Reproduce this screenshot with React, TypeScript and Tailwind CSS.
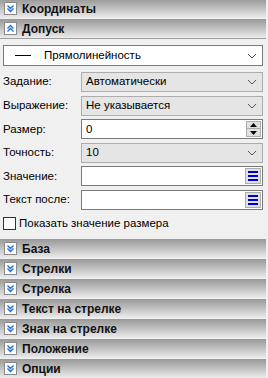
import React from "react";

const FONT = { fontFamily: '"Liberation Sans", Arial, sans-serif' };

function ChevronBox({ open }: { open: boolean }) {
   return (
      <span className="flex h-[13px] w-[13px] items-center justify-center border border-[#8a8a8a] bg-white">
         <svg width="9" height="9" viewBox="0 0 9 9" fill="none">
            {open ? (
               <path
                  d="M1.5 4.5 L4.5 1.5 L7.5 4.5 M1.5 7.5 L4.5 4.5 L7.5 7.5"
                  stroke="#1f6fd8"
                  strokeWidth="1.4"
               />
            ) : (
               <path
                  d="M1.5 1.5 L4.5 4.5 L7.5 1.5 M1.5 4.5 L4.5 7.5 L7.5 4.5"
                  stroke="#1f6fd8"
                  strokeWidth="1.4"
               />
            )}
         </svg>
      </span>
   );
}

function SectionHeader({ title, open = false }: { title: string; open?: boolean }) {
   return (
      <div className="flex h-[19px] w-[266px] items-center gap-[5px] bg-gradient-to-b from-[#989898] to-[#ececec] pl-[4px]">
         <ChevronBox open={open} />
         <span className="text-[12px] font-bold leading-none text-[#111]">{title}</span>
      </div>
   );
}

function Chevron() {
   return (
      <svg width="10" height="6" viewBox="0 0 10 6" fill="none">
         <path d="M1 1 L5 5 L9 1" stroke="#555" strokeWidth="1" />
      </svg>
   );
}

function Combo({ value }: { value: string }) {
   return (
      <div className="flex h-[20px] w-[182px] items-center justify-between border border-[#adadad] bg-[#e5e5e5] pl-[4px] pr-[5px]">
         <span className="text-[11.5px] text-black">{value}</span>
         <Chevron />
      </div>
   );
}

function Row({ label, children }: { label: string; children: React.ReactNode }) {
   return (
      <div className="flex items-center">
         <span className="w-[78px] text-[11.5px] text-black">{label}</span>
         {children}
      </div>
   );
}

function MenuButton() {
   return (
      <span className="flex h-[16px] w-[16px] items-center justify-center border border-[#adadad] bg-[#e1e1e1]">
         <span className="flex flex-col gap-[2px]">
            <span className="h-[2px] w-[10px] bg-[#0000d0]" />
            <span className="h-[2px] w-[10px] bg-[#0000d0]" />
            <span className="h-[2px] w-[10px] bg-[#0000d0]" />
         </span>
      </span>
   );
}

function TextField({ value, button }: { value?: string; button?: boolean }) {
   return (
      <div className="flex h-[20px] w-[182px] items-center justify-between border border-[#7a7a7a] bg-white pl-[4px] pr-[1px]">
         <span className="text-[11.5px] text-black">{value}</span>
         {button && <MenuButton />}
      </div>
   );
}

function SpinField({ value }: { value: string }) {
   return (
      <div className="flex h-[20px] w-[182px] items-center justify-between border border-[#7a7a7a] bg-white pl-[4px] pr-[1px]">
         <span className="text-[11.5px] text-black">{value}</span>
         <span className="flex flex-col">
            <span className="flex h-[8px] w-[15px] items-center justify-center border border-[#adadad] bg-[#e1e1e1]">
               <svg width="7" height="4" viewBox="0 0 7 4"><path d="M0 4 L3.5 0 L7 4 Z" fill="#000" /></svg>
            </span>
            <span className="flex h-[8px] w-[15px] items-center justify-center border border-t-0 border-[#adadad] bg-[#e1e1e1]">
               <svg width="7" height="4" viewBox="0 0 7 4"><path d="M0 0 L3.5 4 L7 0 Z" fill="#000" /></svg>
            </span>
         </span>
      </div>
   );
}

export default function App() {
   const bottom_sections = [
      "База",
      "Стрелки",
      "Стрелка",
      "Текст на стрелке",
      "Знак на стрелке",
      "Положение",
      "Опции",
   ];

   return (
      <div className="h-[378px] w-[268px] overflow-hidden bg-[#f0f0f0]" style={FONT}>
         <div className="-mt-[1px] flex flex-col gap-[1px]">
            <SectionHeader title="Координаты" />
            <SectionHeader title="Допуск" open />
         </div>
         <div className="h-[1px] w-[266px] bg-[#a0a0a0]" />
         <div className="flex flex-col px-[3px] pt-[6px]">
            <div className="flex h-[21px] w-[260px] items-center justify-between border border-[#7a7a7a] bg-white pr-[5px]">
               <div className="flex items-center">
                  <span className="ml-[11px] h-[1px] w-[16px] bg-black" />
                  <span className="ml-[13px] text-[11.5px] text-black">Прямолинейность</span>
               </div>
               <Chevron />
            </div>
            <div className="mt-[6px] flex flex-col gap-[3.6px]">
               <Row label="Задание:">
                  <Combo value="Автоматически" />
               </Row>
               <Row label="Выражение:">
                  <Combo value="Не указывается" />
               </Row>
               <Row label="Размер:">
                  <SpinField value="0" />
               </Row>
               <Row label="Точность:">
                  <Combo value="10" />
               </Row>
               <Row label="Значение:">
                  <TextField button />
               </Row>
               <Row label="Текст после:">
                  <TextField button />
               </Row>
            </div>
            <div className="mt-[5px] flex items-center gap-[3px]">
               <span className="h-[13px] w-[13px] border border-[#333] bg-white" />
               <span className="text-[11.5px] text-black">Показать значение размера</span>
            </div>
         </div>
         <div className="mt-[7px] flex flex-col gap-[1px]">
            {bottom_sections.map((title, i) => (
               <SectionHeader key={i} title={title} />
            ))}
         </div>
      </div>
   );
}
